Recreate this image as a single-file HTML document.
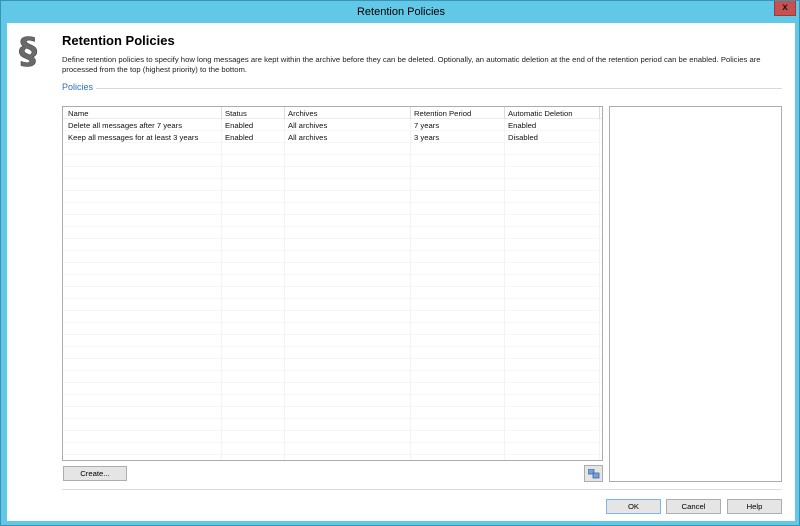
<!DOCTYPE html>
<html><head><style>
*{margin:0;padding:0;box-sizing:border-box}
body{width:800px;height:526px;background:#62c8e8;position:relative;overflow:hidden;font-family:"Liberation Sans",sans-serif;font-size:8px;color:#000}
.win{position:absolute;left:0;top:0;width:800px;height:526px;border:1px solid #3a92b4}
.title{position:absolute;top:5px;left:0;width:800px;text-align:center;font-size:11px;color:#000}
.close{position:absolute;left:773px;top:0;width:22px;height:15px;background:#c75050;border:1px solid #9a3a3a;border-top:none;font-weight:bold;font-size:10px;text-align:center;line-height:13px;color:#1a1a1a}
.client{position:absolute;left:6px;top:22px;width:788px;height:498px;background:#fff}
.a{position:absolute}
h1{position:absolute;left:62px;top:33px;font-size:13px;font-weight:bold}
.desc{position:absolute;left:62px;top:55px;font-size:7.7px;line-height:10px;color:#222;width:725px}
.pol{position:absolute;left:62px;top:82px;font-size:9px;color:#2a6fc0}
.list{position:absolute;left:62px;top:106px;width:541px;height:355px;border:1px solid #acacac;background:
repeating-linear-gradient(to bottom,transparent 0,transparent 11px,#f6f6f6 11px,#f6f6f6 12px);background-position:0 12px}
.vl{position:absolute;top:0;bottom:0;width:1px;background:#f3f3f3}
.hd{position:absolute;top:0;left:0;right:0;height:12px;border-bottom:1px solid #ececec;background:#fff}
.t{position:absolute;font-size:7.7px;white-space:nowrap;color:#111}
.btn{position:absolute;height:15px;border:1px solid #adadad;background:#e5e5e5;font-size:7.7px;text-align:center;line-height:13px}
.right{position:absolute;left:609px;top:106px;width:173px;height:376px;border:1px solid #acacac}
</style></head><body>
<div class="win">
<div class="title">Retention Policies</div>
<div class="close">x</div>
<div class="client"></div>
</div>
<svg class="a" style="left:16px;top:28px" width="34" height="40" viewBox="0 0 34 40">
<text x="3" y="35" font-family="DejaVu Sans" font-weight="bold" font-size="36" fill="#6a6a6a" stroke="#444" stroke-width="0.6">§</text>
</svg>
<h1>Retention Policies</h1>
<div class="desc">Define retention policies to specify how long messages are kept within the archive before they can be deleted. Optionally, an automatic deletion at the end of the retention period can be enabled. Policies are processed from the top (highest priority) to the bottom.</div>
<div class="pol">Policies</div>
<div class="a" style="left:96px;top:88px;width:686px;height:1px;background:#d8d8d8"></div>
<div class="list">
<div class="vl" style="left:158px"></div><div class="vl" style="left:221px"></div><div class="vl" style="left:347px"></div><div class="vl" style="left:441px"></div><div class="vl" style="left:536px"></div>
<div class="hd"></div>
<div class="vl" style="left:158px;height:12px;background:#dcdcdc"></div><div class="vl" style="left:221px;height:12px;background:#dcdcdc"></div><div class="vl" style="left:347px;height:12px;background:#dcdcdc"></div><div class="vl" style="left:441px;height:12px;background:#dcdcdc"></div><div class="vl" style="left:536px;height:12px;background:#dcdcdc"></div>
<div class="t" style="left:5px;top:2px">Name</div><div class="t" style="left:162px;top:2px">Status</div><div class="t" style="left:225px;top:2px">Archives</div><div class="t" style="left:351px;top:2px">Retention Period</div><div class="t" style="left:445px;top:2px">Automatic Deletion</div>
<div class="t" style="left:5px;top:14px">Delete all messages after 7 years</div><div class="t" style="left:162px;top:14px">Enabled</div><div class="t" style="left:225px;top:14px">All archives</div><div class="t" style="left:351px;top:14px">7 years</div><div class="t" style="left:445px;top:14px">Enabled</div>
<div class="t" style="left:5px;top:26px">Keep all messages for at least 3 years</div><div class="t" style="left:162px;top:26px">Enabled</div><div class="t" style="left:225px;top:26px">All archives</div><div class="t" style="left:351px;top:26px">3 years</div><div class="t" style="left:445px;top:26px">Disabled</div>
</div>
<div class="right"></div>
<div class="btn" style="left:63px;top:466px;width:64px">Create...</div>
<div class="btn" style="left:584px;top:465px;width:19px;height:17px"><svg width="12" height="10" style="margin-top:3px"><rect x="0" y="0" width="6" height="5" fill="#7aa0d8" stroke="#3a66a8" stroke-width=".8"/><rect x="5" y="4" width="6" height="5" fill="#7aa0d8" stroke="#3a66a8" stroke-width=".8"/></svg></div>
<div class="a" style="left:62px;top:489px;width:720px;height:1px;background:#dcdcdc"></div>
<div class="btn" style="left:606px;top:499px;width:55px;border-color:#7eb4ea">OK</div>
<div class="btn" style="left:666px;top:499px;width:55px">Cancel</div>
<div class="btn" style="left:727px;top:499px;width:55px">Help</div>
</body></html>
